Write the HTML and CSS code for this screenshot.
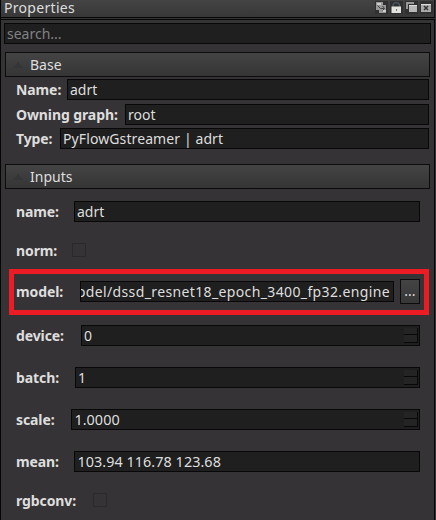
FILE: index.html
```html
<!DOCTYPE html>
<html lang="en">
<head>
<meta charset="utf-8">
<title>Properties</title>
<link rel="stylesheet" href="styles.css">
</head>
<body>
<div class="panel">
  <header class="titlebar">
    <span class="title">Properties</span>
    <div class="tools">
      <svg width="13" height="13" viewBox="0 0 13 13"><path fill="#999" d="M1 1h7v3h3v8H4V9H1z"/><path fill="#ccc" d="M2 2h4v2H2zM8 9h3v2H8z"/><path fill="none" stroke="#444" d="M2.5 4.5l3 3h4M7.5 5l2 2.5-2 2"/></svg>
      <svg width="13" height="13" viewBox="0 0 13 13"><path fill="none" stroke="#4b5963" stroke-width="1.3" d="M3 6V4.5C3 .6 9.5.6 9.5 4.5V6"/><path fill="#e2e2df" d="M1.500 5.500h9.500v6.500H1.500z"/><path fill="#777" d="M6 8h1v2H6z"/></svg>
      <svg width="13" height="13" viewBox="0 0 13 13"><path fill="#999" d="M1 1h8v2H3v5H1z"/><path fill="#b8b8b8" d="M4 4h8v7H4z"/><path fill="#ddd" d="M4 4h8v1H4z"/></svg>
      <svg width="13" height="13" viewBox="0 0 13 13"><path fill="#aaa" d="M1 3h10v8H1z"/><path fill="#ddd" d="M1 3h10v1H1z"/><path stroke="#333" stroke-width="1.5" d="M4 5l4 4M8 5L4 9"/></svg>
    </div>
  </header>
  <main class="content">
    <div class="field search"><span>search...</span></div>
    <div class="section base"><i class="arrow"></i><span>Base</span></div>
    <div class="row base-row"><b class="label l-name">Name:</b><div class="field"><span>adrt</span></div></div>
    <div class="row base-row"><b class="label l-owning">Owning graph:</b><div class="field"><span>root</span></div></div>
    <div class="row base-row type"><b class="label l-type">Type:</b><div class="field"><span class="t-type">PyFlowGstreamer | adrt</span></div></div>
    <div class="section inputs"><i class="arrow"></i><span>Inputs</span></div>
    <div class="row input-row first"><b class="label l-iname">name:</b><div class="field"><span>adrt</span></div></div>
    <div class="row check-row"><b class="label l-norm">norm:</b><i class="check"></i></div>
    <div class="highlight">
      <b class="label l-model">model:</b>
      <div class="field path"><span class="t-path">model/dssd_resnet18_epoch_3400_fp32.engine</span></div>
      <div class="browse">...</div>
    </div>
    <div class="row input-row device"><b class="label l-device">device:</b><div class="field"><span>0</span><i class="spin"></i></div></div>
    <div class="row input-row"><b class="label l-batch">batch:</b><div class="field"><span>1</span><i class="spin"></i></div></div>
    <div class="row input-row"><b class="label l-scale">scale:</b><div class="field"><span class="num">1.0000</span><i class="spin"></i></div></div>
    <div class="row input-row"><b class="label l-mean">mean:</b><div class="field"><span class="num">103.94 116.78 123.68</span></div></div>
    <div class="row check-row"><b class="label l-rgb">rgbconv:</b><i class="check"></i></div>
  </main>
</div>
</body>
</html>
```
FILE: styles.css
```css
* { box-sizing: border-box; }
body {
  margin: 0;
  background: #353335;
  color: #dedede;
  font: 14px/19px "Noto Sans", "Open Sans", sans-serif;
}
.panel {
  height: 520px;
  background: #353335;
  border-left: 1px solid #050505;
}
.titlebar {
  display: flex;
  justify-content: space-between;
  height: 18px;
  padding: 0 1px 0 3px;
  background: linear-gradient(#444445, #373738);
  border-bottom: 1px solid #050505;
  border-right: 1px solid #111;
  margin-right: 1px;
}
.title { line-height: 16px; letter-spacing: .3px; }
.tools { display: flex; gap: 2px; padding-top: 1px; }
.tools svg { background: #303031; }
.content {
  height: 501px;
  margin: 1px 1px 0 0;
  padding-top: 3px;
  border-top: 1px solid #050505;
  border-right: 1px solid #050505;
}
.field {
  display: flex;
  align-items: center;
  flex: 1;
  height: 21px;
  padding: 0 2px;
  background: #1f1f1f;
  border: 1px solid #080808;
  white-space: nowrap;
}
.search { margin: 0 3px 0 3px; color: #828282; }
.section {
  display: flex;
  align-items: center;
  height: 25px;
  margin: 0 4px 0 4px;
  background: linear-gradient(#444445, #353536);
  border: 1px solid #0c0c0c;
}
.base { margin-top: 8px; margin-bottom: 2px; }
.inputs { margin-top: 15px; }
.arrow {
  width: 0;
  margin: 0 7px;
  border: 5px solid transparent;
  border-top: 0;
  border-bottom: 6px solid #343536;
}
.row { display: flex; align-items: center; padding-left: 15px; }
.base-row { height: 21px; margin-right: 5px; }
.base-row + .base-row { margin-top: 4px; }
.base-row + .base-row.type { margin-top: 3px; }
.input-row { height: 21px; margin: 21px 14px 0 0; }
.input-row.first { margin-top: 12px; }
.input-row.device { margin-top: 10px; }
.check-row { height: 14px; margin-top: 21px; }
.check { width: 14px; height: 14px; border: 1px solid #292929; }
.label { flex: none; white-space: nowrap; letter-spacing: -.1px; }
.l-name { width: 51px; }
.l-owning { width: 109px; }
.l-type { width: 44px; }
.l-iname { width: 58px; }
.l-norm { width: 56px; }
.l-model { width: 64px; }
.l-device { width: 65px; }
.l-batch { width: 59px; }
.l-scale { width: 55px; }
.l-mean { width: 58px; }
.l-rgb { width: 77px; }
.t-type { letter-spacing: .1px; }
.num { font-size: 14.4px; letter-spacing: .05px; padding-left: .4px; }
.highlight {
  display: flex;
  align-items: center;
  height: 46px;
  margin: 12px 5px 0 8px;
  padding: 0 4px 1px 2px;
  border: 5px solid #ed1c24;
}
.path { overflow: hidden; justify-content: flex-end; padding-right: 3px; }
.t-path { letter-spacing: .37px; }
.browse {
  width: 20px;
  height: 25px;
  margin-left: 6px;
  background: linear-gradient(#444445, #373738);
  border: 1px solid #0c0c0c;
  text-align: center;
  line-height: 22px;
}
.spin {
  width: 14px;
  height: 15px;
  margin: 0 -1px 0 auto;
  border-right: 1px solid #080808;
  border-bottom: 1px solid #080808;
  background: linear-gradient(#242424 6px, #080808 6px, #080808 7px, #242424 7px);
}
```
